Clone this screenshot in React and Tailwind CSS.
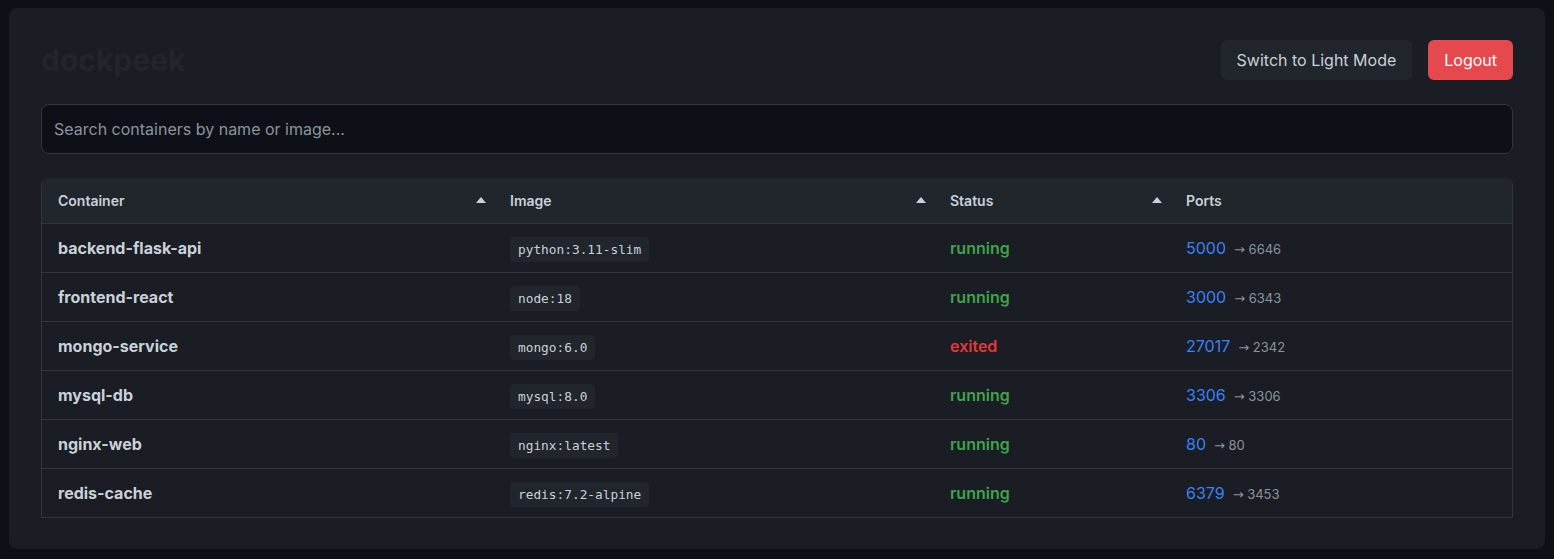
const CONTAINERS = [
  { name: 'backend-flask-api', image: 'python:3.11-slim', status: 'running', port: '5000', host: '6646' },
  { name: 'frontend-react', image: 'node:18', status: 'running', port: '3000', host: '6343' },
  { name: 'mongo-service', image: 'mongo:6.0', status: 'exited', port: '27017', host: '2342' },
  { name: 'mysql-db', image: 'mysql:8.0', status: 'running', port: '3306', host: '3306' },
  { name: 'nginx-web', image: 'nginx:latest', status: 'running', port: '80', host: '80' },
  { name: 'redis-cache', image: 'redis:7.2-alpine', status: 'running', port: '6379', host: '3453' },
]

function SortArrow() {
  return (
    <svg width="10" height="6" viewBox="0 0 10 6" className="fill-[#c9d1d9]">
      <path d="M0 6 L5 0 L10 6 Z" />
    </svg>
  )
}

function HeaderCell({ label, sortable, className }) {
  return (
    <th className={`h-[45px] pl-4 pr-2 text-left text-[14px] font-semibold text-[#c9d1d9] ${className}`}>
      <div className="flex items-center justify-between">
        <span>{label}</span>
        {sortable && <SortArrow />}
      </div>
    </th>
  )
}

export default function App() {
  return (
    <div className="min-h-screen bg-[#0d1117] py-[8px] px-[9px] font-['Inter',sans-serif]">
      <div className="rounded-lg bg-[#1a1d23] px-[32px] pt-[32px] pb-[31px]">
        <div className="flex items-center justify-between h-[40px]">
          <h1 className="text-[30px] font-bold text-[#22262c] leading-none">dockpeek</h1>
          <div className="flex items-center gap-4">
            <button className="h-[40px] px-4 rounded-md bg-[#21252c] text-[16px] text-[#c9d1d9]">
              Switch to Light Mode
            </button>
            <button className="h-[40px] px-4 rounded-md bg-[#e5484d] text-[16px] text-white">
              Logout
            </button>
          </div>
        </div>

        <input
          className="mt-[24px] block w-full h-[50px] rounded-lg border border-[#30363d] bg-[#0d1117] px-[12px] text-[16px] text-[#c9d1d9] placeholder-[#8b949e] outline-none"
          placeholder="Search containers by name or image..."
        />

        <div className="mt-[24px] overflow-hidden rounded-t-lg border-l border-r border-[#30363d]">
          <table className="w-full border-collapse table-fixed">
            <thead className="bg-[#21252c]">
              <tr className="border-b border-[#30363d]">
                <HeaderCell label="Container" sortable className="w-[452px]" />
                <HeaderCell label="Image" sortable className="w-[440px]" />
                <HeaderCell label="Status" sortable className="w-[236px]" />
                <HeaderCell label="Ports" />
              </tr>
            </thead>
            <tbody>
              {CONTAINERS.map(({ name, image, status, port, host }) => (
                <tr key={name} className="h-[49px] border-b border-[#30363d]">
                  <td className="px-4 text-[16px] font-bold text-[#c9d1d9]">{name}</td>
                  <td className="px-4">
                    <code className="rounded bg-[#21252c] px-[8px] py-[5px] font-['DejaVu_Sans_Mono',monospace] text-[12.8px] text-[#c9d1d9]">
                      {image}
                    </code>
                  </td>
                  <td className={`px-4 text-[16px] font-semibold ${status === 'running' ? 'text-[#3fa34a]' : 'text-[#e5383b]'}`}>
                    {status}
                  </td>
                  <td className="px-4">
                    <span className="text-[16px] text-[#3b82f6]">{port}</span>
                    <span className="ml-2 text-[13px] text-[#8b949e]">
                      <span className="font-['DejaVu_Sans',sans-serif]">→</span> {host}
                    </span>
                  </td>
                </tr>
              ))}
            </tbody>
          </table>
        </div>
      </div>
    </div>
  )
}
